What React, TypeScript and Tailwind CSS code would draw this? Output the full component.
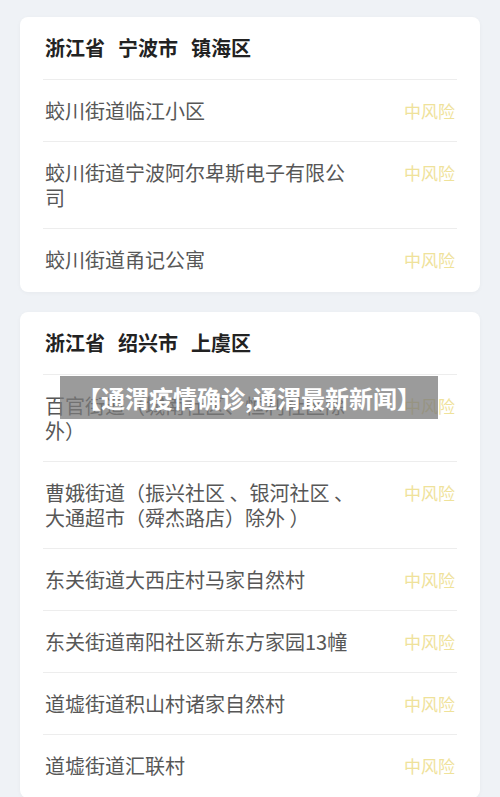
import React from "react";

type Row = { name: string; risk: string };

const cards: { region: string[]; rows: Row[] }[] = [
  {
    region: ["浙江省", "宁波市", "镇海区"],
    rows: [
      { name: "蛟川街道临江小区", risk: "中风险" },
      { name: "蛟川街道宁波阿尔卑斯电子有限公司", risk: "中风险" },
      { name: "蛟川街道甬记公寓", risk: "中风险" },
    ],
  },
  {
    region: ["浙江省", "绍兴市", "上虞区"],
    rows: [
      { name: "百官街道（城南社区、恒利社区除外）", risk: "中风险" },
      { name: "曹娥街道（振兴社区 、银河社区 、大通超市（舜杰路店）除外 ）", risk: "中风险" },
      { name: "东关街道大西庄村马家自然村", risk: "中风险" },
      { name: "东关街道南阳社区新东方家园13幢", risk: "中风险" },
      { name: "道墟街道积山村诸家自然村", risk: "中风险" },
      { name: "道墟街道汇联村", risk: "中风险" },
    ],
  },
];

export default function App() {
  return (
    <div
      className="relative w-[500px] h-[797px] overflow-hidden bg-[#eff2f6] pt-[17px] flex flex-col gap-[20px]"
      style={{ fontFamily: '"Noto Sans CJK SC", "Noto Sans", sans-serif' }}
    >
      {cards.map((card, ci) => (
        <div
          key={ci}
          className="mx-[20px] bg-white rounded-[8px] px-[23px] pb-[2px] shadow-[0_1px_4px_rgba(0,0,0,0.04)] shrink-0"
        >
          <div className="h-[62px] flex items-center gap-[13px] pl-[2px] text-[20px] font-bold text-[#222]">
            {card.region.map((r) => (
              <span key={r}>{r}</span>
            ))}
          </div>
          {card.rows.map((row, ri) => (
            <div
              key={ri}
              className="border-t border-[#ededed] py-[18px] flex items-start justify-between"
            >
              <div className="w-[316px] pl-[2px] text-[20px] leading-[25px] text-[#575757]">
                {row.name}
              </div>
              <div className="pr-[2px] text-[17px] leading-[25px] text-[#efe29a]">
                {row.risk}
              </div>
            </div>
          ))}
        </div>
      ))}
      <div className="absolute left-[60px] top-[376px] w-[378px] h-[43px] bg-[#7a7a7a]/75 flex items-center justify-center">
        <span className="text-[24px] font-bold text-white leading-none">
          【通渭疫情确诊,通渭最新新闻】
        </span>
      </div>
    </div>
  );
}
